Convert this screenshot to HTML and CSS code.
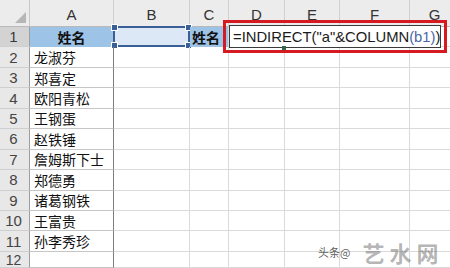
FILE: index.html
```html
<!DOCTYPE html>
<html lang="zh">
<head>
<meta charset="utf-8">
<link rel="stylesheet" href="styles.css">
</head>
<body>
<div class="sheet">
  <div class="grid">
    <div class="corner"><span class="tri"></span></div>
    <div class="ch">A</div><div class="ch">B</div><div class="ch">C</div><div class="ch">D</div><div class="ch">E</div><div class="ch">F</div><div class="ch">G</div>

    <div class="rh sel">1</div><div class="c a head">姓名</div><div class="c active"><i class="h tl"></i><i class="h bl"></i><i class="h tr"></i><i class="h br"></i></div><div class="c head left">姓名</div><div class="c"></div><div class="c"></div><div class="c"></div><div class="c"></div>
    <div class="rh">2</div><div class="c a">龙淑芬</div><div class="c"></div><div class="c"></div><div class="c"></div><div class="c"></div><div class="c"></div><div class="c"></div>
    <div class="rh">3</div><div class="c a">郑喜定</div><div class="c"></div><div class="c"></div><div class="c"></div><div class="c"></div><div class="c"></div><div class="c"></div>
    <div class="rh">4</div><div class="c a">欧阳青松</div><div class="c"></div><div class="c"></div><div class="c"></div><div class="c"></div><div class="c"></div><div class="c"></div>
    <div class="rh">5</div><div class="c a">王钢蛋</div><div class="c"></div><div class="c"></div><div class="c"></div><div class="c"></div><div class="c"></div><div class="c"></div>
    <div class="rh">6</div><div class="c a">赵铁锤</div><div class="c"></div><div class="c"></div><div class="c"></div><div class="c"></div><div class="c"></div><div class="c"></div>
    <div class="rh">7</div><div class="c a">詹姆斯下士</div><div class="c"></div><div class="c"></div><div class="c"></div><div class="c"></div><div class="c"></div><div class="c"></div>
    <div class="rh">8</div><div class="c a">郑德勇</div><div class="c"></div><div class="c"></div><div class="c"></div><div class="c"></div><div class="c"></div><div class="c"></div>
    <div class="rh">9</div><div class="c a">诸葛钢铁</div><div class="c"></div><div class="c"></div><div class="c"></div><div class="c"></div><div class="c"></div><div class="c"></div>
    <div class="rh">10</div><div class="c a">王富贵</div><div class="c"></div><div class="c"></div><div class="c"></div><div class="c"></div><div class="c"></div><div class="c"></div>
    <div class="rh">11</div><div class="c a">孙李秀珍</div><div class="c"></div><div class="c"></div><div class="c"></div><div class="c"></div><div class="c"></div><div class="c"></div>
    <div class="rh last">12</div><div class="c a"></div><div class="c"></div><div class="c"></div><div class="c"></div><div class="c"></div><div class="c"></div><div class="c"></div>
  </div>

  <div class="callout">
    <div class="edit"><span>=INDIRECT("a"&amp;COLUMN</span><span class="ref">(b1)</span><span>)</span><i class="fill"></i></div>
  </div>

  <div class="mark"><span class="small">头条@</span><span class="big">艺水网</span></div>
</div>
</body>
</html>
```

FILE: styles.css
```css
html, body {
  margin: 0;
  padding: 0;
  background: #ffffff;
  overflow: hidden;
}

.sheet {
  position: relative;
  width: 450px;
  height: 268px;
  overflow: hidden;
  font-family: "Noto Sans CJK SC", "Noto Sans", sans-serif;
}

.grid {
  display: grid;
  grid-template-columns: 30px 84px 76px 39px 56px 55px 70px 50px;
  grid-template-rows: 27px repeat(11, 20.45px) 16px;
  width: 460px;
}

.grid > div {
  box-sizing: border-box;
  border-right: 1px solid #dadada;
  border-bottom: 1px solid #dadada;
  position: relative;
}

.corner {
  background: #ececec;
  border-right: 1px solid #c8c8c8 !important;
  border-bottom: 1px solid #b9b9b9 !important;
}

.tri {
  position: absolute;
  right: 3px;
  bottom: 3px;
  width: 0;
  height: 0;
  border-left: 11px solid transparent;
  border-bottom: 11px solid #b6b6b6;
}

.ch {
  background: #ececec;
  color: #333;
  font-family: "Liberation Sans", sans-serif;
  font-size: 15px;
  display: flex;
  align-items: flex-end;
  justify-content: center;
  padding-bottom: 3px;
  border-bottom: 1px solid #b9b9b9 !important;
  border-right: 1px solid #d0d0d0 !important;
}

.rh {
  background: #e8e8e8;
  color: #444;
  font-family: "Liberation Sans", sans-serif;
  font-size: 15px;
  display: flex;
  align-items: center;
  justify-content: center;
  padding-right: 2px;
  border-right: 1px solid #9e9e9e !important;
  border-bottom: 1px solid #cfcfcf !important;
}

.rh.last {
  align-items: flex-start;
  padding-top: 1px;
  font-size: 14px;
  line-height: 15px;
  overflow: hidden;
}

.rh.sel {
  background: #d3d3d3;
  color: #3a3a3a;
}

.c {
  font-size: 14px;
  color: #111;
  display: flex;
  align-items: center;
  padding-left: 4px;
  white-space: nowrap;
}

.c.a {
  border-right: 1px solid #7d7d7d !important;
  border-bottom: 1px solid #c6c6c6 !important;
}

.c.head {
  background: #9dc3e6;
  font-weight: bold;
  justify-content: center;
  padding-left: 0;
  border-bottom: 1px solid #9dc3e6 !important;
}

.c.head.left {
  justify-content: flex-start;
  padding-left: 2px;
}

.c.active {
  background: #dce8f6;
  border: 2px solid #3a5f96 !important;
  margin: -1px 0 0 -1px;
}

.h {
  position: absolute;
  width: 5px;
  height: 5px;
  background: #3a5f96;
  border: 1px solid #fff;
}
.h.tl { left: -4px; top: -4px; }
.h.bl { left: -4px; bottom: -4px; }
.h.tr { right: -4px; top: -4px; }
.h.br { right: -4px; bottom: -4px; }

.callout {
  position: absolute;
  left: 223px;
  top: 20px;
  width: 224px;
  height: 33px;
  box-sizing: border-box;
  border: 3px solid #d51a22;
  padding: 2px 4px 2px 3px;
  display: flex;
}

.edit {
  position: relative;
  flex: 1;
  box-sizing: border-box;
  background: #fff;
  border: 1px solid #3b3b3b;
  display: flex;
  align-items: center;
  padding-left: 3px;
  font-family: "Liberation Sans", sans-serif;
  font-size: 14.8px;
  color: #1b1b1b;
  white-space: nowrap;
}

.ref {
  color: #4a67a6;
}

.fill {
  position: absolute;
  left: 52px;
  bottom: -3px;
  width: 4px;
  height: 4px;
  background: #2f6b48;
}

.mark {
  position: absolute;
  left: 318px;
  top: 236px;
  display: flex;
  align-items: center;
  gap: 12px;
  white-space: nowrap;
}

.small {
  font-size: 11px;
  color: rgba(40, 40, 40, 0.75);
}

.big {
  font-size: 22px;
  font-weight: bold;
  letter-spacing: 5px;
  color: rgba(90, 90, 90, 0.45);
}
```
